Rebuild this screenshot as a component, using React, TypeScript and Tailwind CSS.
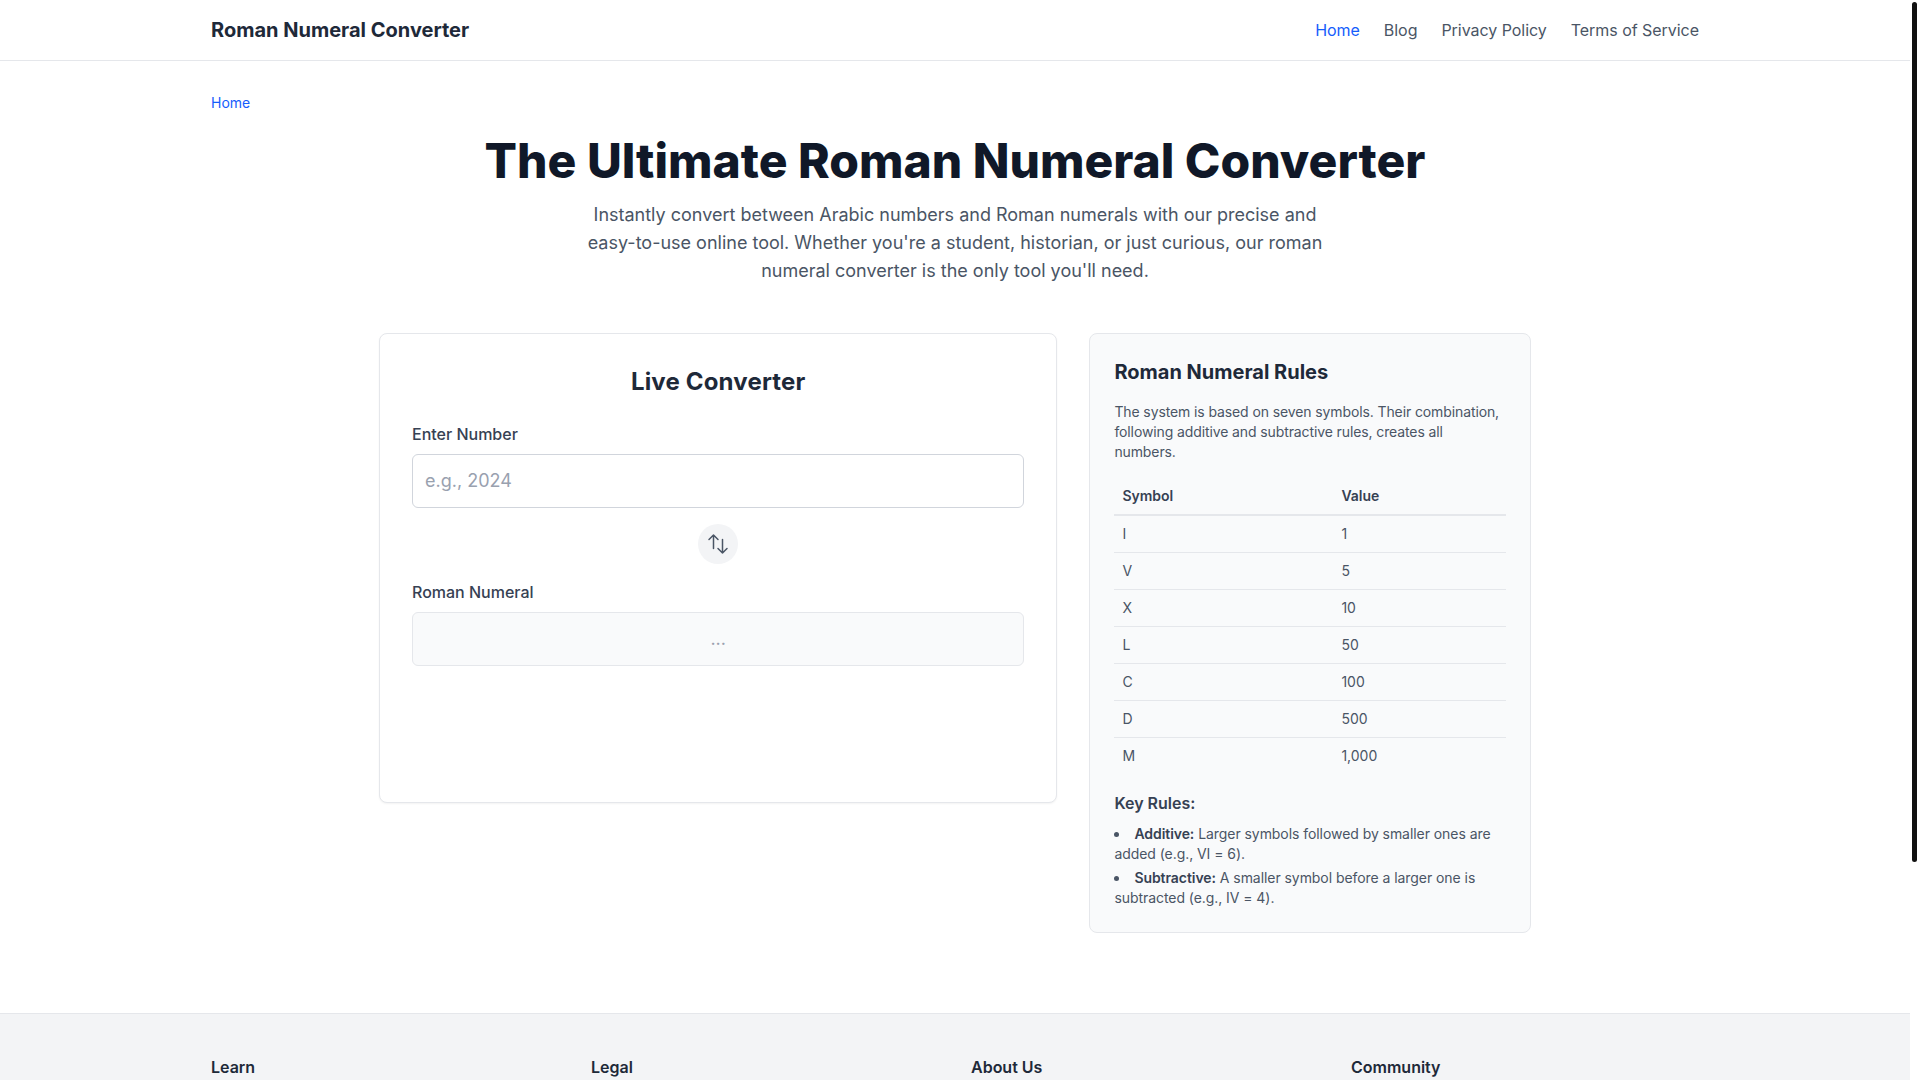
export default function App() {
  const rows: [string, string][] = [
    ["I", "1"],
    ["V", "5"],
    ["X", "10"],
    ["L", "50"],
    ["C", "100"],
    ["D", "500"],
    ["M", "1,000"],
  ];
  const footer = ["Learn", "Legal", "About Us", "Community"];
  return (
    <div className="relative h-screen overflow-hidden bg-white text-gray-800 antialiased font-['Inter',sans-serif]">
      <div className="w-[1910px]">
        <header className="border-b border-gray-200 bg-white">
          <div className="mx-auto flex h-[60px] w-[1488px] items-center justify-between">
            <a className="text-xl font-bold text-gray-800">Roman Numeral Converter</a>
            <nav className="flex items-center gap-6 tracking-[-0.04px] text-gray-600">
              <a className="text-blue-600">Home</a>
              <a>Blog</a>
              <a>Privacy Policy</a>
              <a>Terms of Service</a>
            </nav>
          </div>
        </header>

        <main className="mx-auto w-[1488px] pt-8 pb-20">
          <div className="text-sm leading-5 text-blue-600">Home</div>

          <section className="mt-6 text-center">
            <h1 className="text-5xl font-extrabold text-gray-900">The Ultimate Roman Numeral Converter</h1>
            <p className="mx-auto mt-4 max-w-3xl text-lg text-gray-600">
              Instantly convert between Arabic numbers and Roman numerals with our precise and easy-to-use online tool. Whether you're a student, historian, or just curious, our roman numeral converter is the only tool you'll need.
            </p>
          </section>

          <div className="mx-auto mt-12 grid max-w-6xl grid-cols-5 items-start gap-8">
            <section className="col-span-3 h-[470px] rounded-lg border border-gray-200 bg-white p-8 shadow-xs">
              <h2 className="text-center text-2xl font-bold tracking-[0.17px] text-gray-800">Live Converter</h2>
              <label className="mt-6 block font-medium text-gray-700">Enter Number</label>
              <input
                placeholder="e.g., 2024"
                className="mt-2 block w-full rounded-md border border-gray-300 p-3 text-lg placeholder:text-gray-400"
              />
              <div className="my-4 flex justify-center">
                <button className="flex h-10 w-10 items-center justify-center rounded-full bg-gray-100 text-gray-600">
                  <svg viewBox="0 0 24 24" fill="none" stroke="currentColor" strokeWidth={1.5} strokeLinecap="round" strokeLinejoin="round" className="h-6 w-6">
                    <path d="M3 7.5 7.5 3m0 0L12 7.5M7.5 3v13.5m13.5 0L16.5 21m0 0L12 16.5m4.5 4.5V7.5" />
                  </svg>
                </button>
              </div>
              <label className="block font-medium text-gray-700">Roman Numeral</label>
              <div className="mt-2 h-[54px] rounded-md border border-gray-200 bg-gray-50 p-3 text-center text-lg text-gray-400">...</div>
            </section>

            <aside className="col-span-2 rounded-lg border border-gray-200 bg-gray-50 p-6">
              <h2 className="text-xl font-bold text-gray-800">Roman Numeral Rules</h2>
              <p className="mt-4 text-sm tracking-[-0.11px] text-gray-600">
                The system is based on seven symbols. Their combination, following additive and subtractive rules, creates all numbers.
              </p>
              <table className="mt-4 w-full text-left text-sm text-gray-600">
                <thead>
                  <tr className="border-b-2 border-gray-200">
                    <th className="w-[219px] px-2 py-2 font-semibold text-gray-700">Symbol</th>
                    <th className="px-2 py-2 font-semibold text-gray-700">Value</th>
                  </tr>
                </thead>
                <tbody>
                  {rows.map(([s, v], i) => (
                    <tr key={s} className={i < rows.length - 1 ? "border-b border-gray-200" : ""}>
                      <td className="px-2 py-2">{s}</td>
                      <td className="px-2 py-2">{v}</td>
                    </tr>
                  ))}
                </tbody>
              </table>
              <h3 className="mt-[17px] font-semibold text-gray-700">Key Rules:</h3>
              <ul className="mt-[9px] list-inside list-disc space-y-1 text-sm tracking-[-0.06px] text-gray-600">
                <li><strong className="font-semibold text-gray-700">Additive:</strong> Larger symbols followed by smaller ones are added (e.g., VI = 6).</li>
                <li><strong className="font-semibold text-gray-700">Subtractive:</strong> A smaller symbol before a larger one is subtracted (e.g., IV = 4).</li>
              </ul>
            </aside>
          </div>
        </main>

        <footer className="border-t border-gray-200 bg-gray-100">
          <div className="mx-auto grid w-[1488px] grid-cols-4 gap-8 pt-[41px] pb-10">
            {footer.map((title) => (
              <h4 key={title} className="font-semibold text-gray-800">{title}</h4>
            ))}
          </div>
        </footer>
      </div>
      <div className="absolute top-[2px] right-[3px] h-[860px] w-[5px] rounded-full bg-[#111111]" />
    </div>
  );
}
